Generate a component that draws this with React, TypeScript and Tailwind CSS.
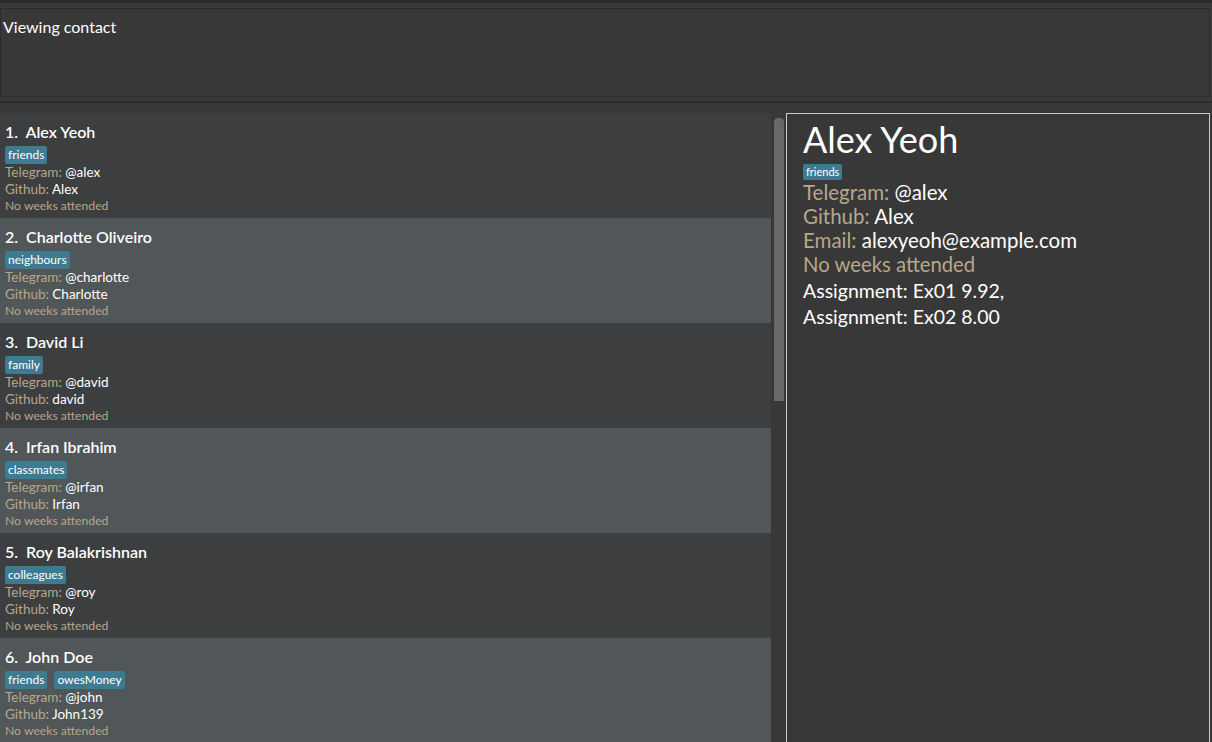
import React from "react";

type Person = {
  name: string;
  tags: string[];
  telegram: string;
  github: string;
};

const people: Person[] = [
  { name: "Alex Yeoh", tags: ["friends"], telegram: "@alex", github: "Alex" },
  { name: "Charlotte Oliveiro", tags: ["neighbours"], telegram: "@charlotte", github: "Charlotte" },
  { name: "David Li", tags: ["family"], telegram: "@david", github: "david" },
  { name: "Irfan Ibrahim", tags: ["classmates"], telegram: "@irfan", github: "Irfan" },
  { name: "Roy Balakrishnan", tags: ["colleagues"], telegram: "@roy", github: "Roy" },
  { name: "John Doe", tags: ["friends", "owesMoney"], telegram: "@john", github: "John139" },
];

const font = { fontFamily: '"Segoe UI", Lato, "Open Sans", sans-serif' };

const Tag = ({ label, big }: { label: string; big?: boolean }) => (
  <span
    className={`inline-flex items-center rounded-[2px] bg-[#3e7b91] px-[3px] text-white ${
      big ? "h-[18px] text-[12px]" : "h-[16px] text-[11px]"
    }`}
  >
    {label}
  </span>
);

const PersonCard = ({ person, index }: { person: Person; index: number }) => (
  <div
    className={`h-[105px] shrink-0 pl-[5px] pt-[9px] ${
      index % 2 === 0 ? "bg-[#3c3e3f]" : "bg-[#515658]"
    }`}
  >
    <div className="h-[20px] text-[16px] font-semibold leading-[20px] text-white">
      {index + 1}.&nbsp; {person.name}
    </div>
    <div className="mt-[4px] flex gap-[7px]">
      {person.tags.map((t) => (
        <Tag key={t} label={t} big />
      ))}
    </div>
    <div className="text-[13.5px] leading-[17px]">
      <span className="text-[#b8a78a]">Telegram: </span>
      <span className="text-white">{person.telegram}</span>
    </div>
    <div className="text-[13.5px] leading-[17px]">
      <span className="text-[#b8a78a]">Github: </span>
      <span className="text-white">{person.github}</span>
    </div>
    <div className="text-[12.2px] leading-[15px] text-[#b8a78a]">No weeks attended</div>
  </div>
);

export default function App() {
  return (
    <div className="flex h-[742px] w-[1212px] flex-col overflow-hidden bg-[#383838]" style={font}>
      <div className="h-[3px] shrink-0 bg-[#2b2b2b]" />
      <div className="h-[5px] shrink-0" />
      <div className="mr-[2px] h-[89px] shrink-0 border border-[#2b2b2b] bg-[#383838] px-[2px] pt-[8px]">
        <div className="text-[16px] leading-[20px] text-white">Viewing contact</div>
      </div>
      <div className="h-[4px] shrink-0" />
      <div className="h-[2px] shrink-0 bg-[#2b2b2b]" />
      <div className="h-[10px] shrink-0" />
      <div className="flex min-h-0 flex-1">
        <div className="flex w-[771px] shrink-0 flex-col overflow-hidden">
          {people.map((p, i) => (
            <PersonCard key={p.name} person={p} index={i} />
          ))}
        </div>
        <div className="w-[15px] shrink-0 pl-[3px] pt-[5px]">
          <div className="h-[283px] w-[10px] rounded-t-[4px] bg-[#686868]" />
        </div>
        <div className="mr-[2px] flex-1 border border-b-0 border-[#c8c8c8] bg-[#383838] pl-[16px] pt-[5px]">
          <div className="text-[36px] leading-[40px] text-white">Alex Yeoh</div>
          <div className="mt-[5px] flex">
            <Tag label="friends" />
          </div>
          <div className="text-[20.5px] leading-[24px]">
            <span className="text-[#b8a78a]">Telegram: </span>
            <span className="text-white">@alex</span>
          </div>
          <div className="text-[20.5px] leading-[24px]">
            <span className="text-[#b8a78a]">Github: </span>
            <span className="text-white">Alex</span>
          </div>
          <div className="text-[20.5px] leading-[24px]">
            <span className="text-[#b8a78a]">Email: </span>
            <span className="text-white">alexyeoh@example.com</span>
          </div>
          <div className="text-[20.3px] leading-[24px] text-[#b8a78a]">No weeks attended</div>
          <div className="mt-[2px] text-[19.5px] leading-[26px] text-white">
            Assignment: Ex01 9.92,
          </div>
          <div className="text-[19.5px] leading-[26px] text-white">Assignment: Ex02 8.00</div>
        </div>
      </div>
    </div>
  );
}
